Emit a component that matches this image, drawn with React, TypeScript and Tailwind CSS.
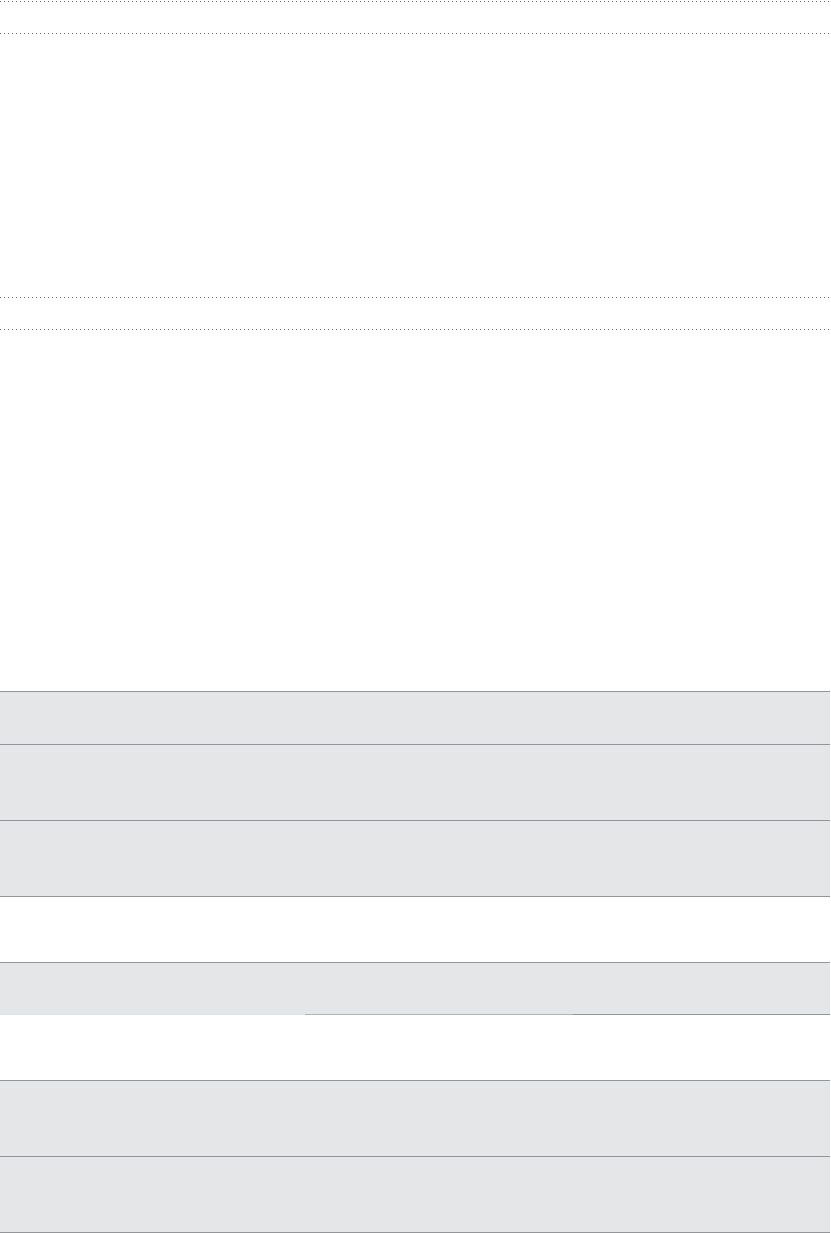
// Blank spec sheet: dotted rules at the top, empty shaded table below.
const ROWS = [
  { h: 'h-[53px]', shaded: true },
  { h: 'h-[76px]', shaded: true },
  { h: 'h-[76px]', shaded: true },
  { h: 'h-[66px]', shaded: false },
  { h: 'h-[52px]', shaded: true, split: true },
  { h: 'h-[66px]', shaded: false },
  { h: 'h-[76px]', shaded: true },
  { h: 'h-[76px]', shaded: true },
]

function DottedRule() {
  return (
    <div className="h-px w-[830px] bg-[linear-gradient(to_right,#6d6e71_1px,transparent_1px)] bg-[length:4px_1px]" />
  )
}

export default function App() {
  return (
    <div className="w-[831px] min-h-[1233px] bg-white font-['Liberation_Sans',sans-serif]">
      {/* Top rules */}
      <div className="pt-px">
        <DottedRule />
        <div className="h-[31px]" />
        <DottedRule />
      </div>

      <div className="h-[263px]" />

      <div>
        <DottedRule />
        <div className="h-[31px]" />
        <DottedRule />
      </div>

      <div className="h-[361px]" />

      {/* Empty table */}
      <div className="w-[830px] border-t border-[#939598]">
        {ROWS.map((row, i) =>
          row.split ? (
            <div key={i} className={`${row.h} grid grid-cols-[305px_268px_1fr] bg-[#e5e6e8]`}>
              <div className="border-b border-[#e0e1e3]" />
              <div className="border-b border-[#b1b3b6]" />
              <div className="border-b border-[#939598]" />
            </div>
          ) : (
            <div
              key={i}
              className={`${row.h} border-b border-[#939598] ${row.shaded ? 'bg-[#e5e6e8]' : 'bg-white'}`}
            />
          )
        )}
      </div>
    </div>
  )
}
